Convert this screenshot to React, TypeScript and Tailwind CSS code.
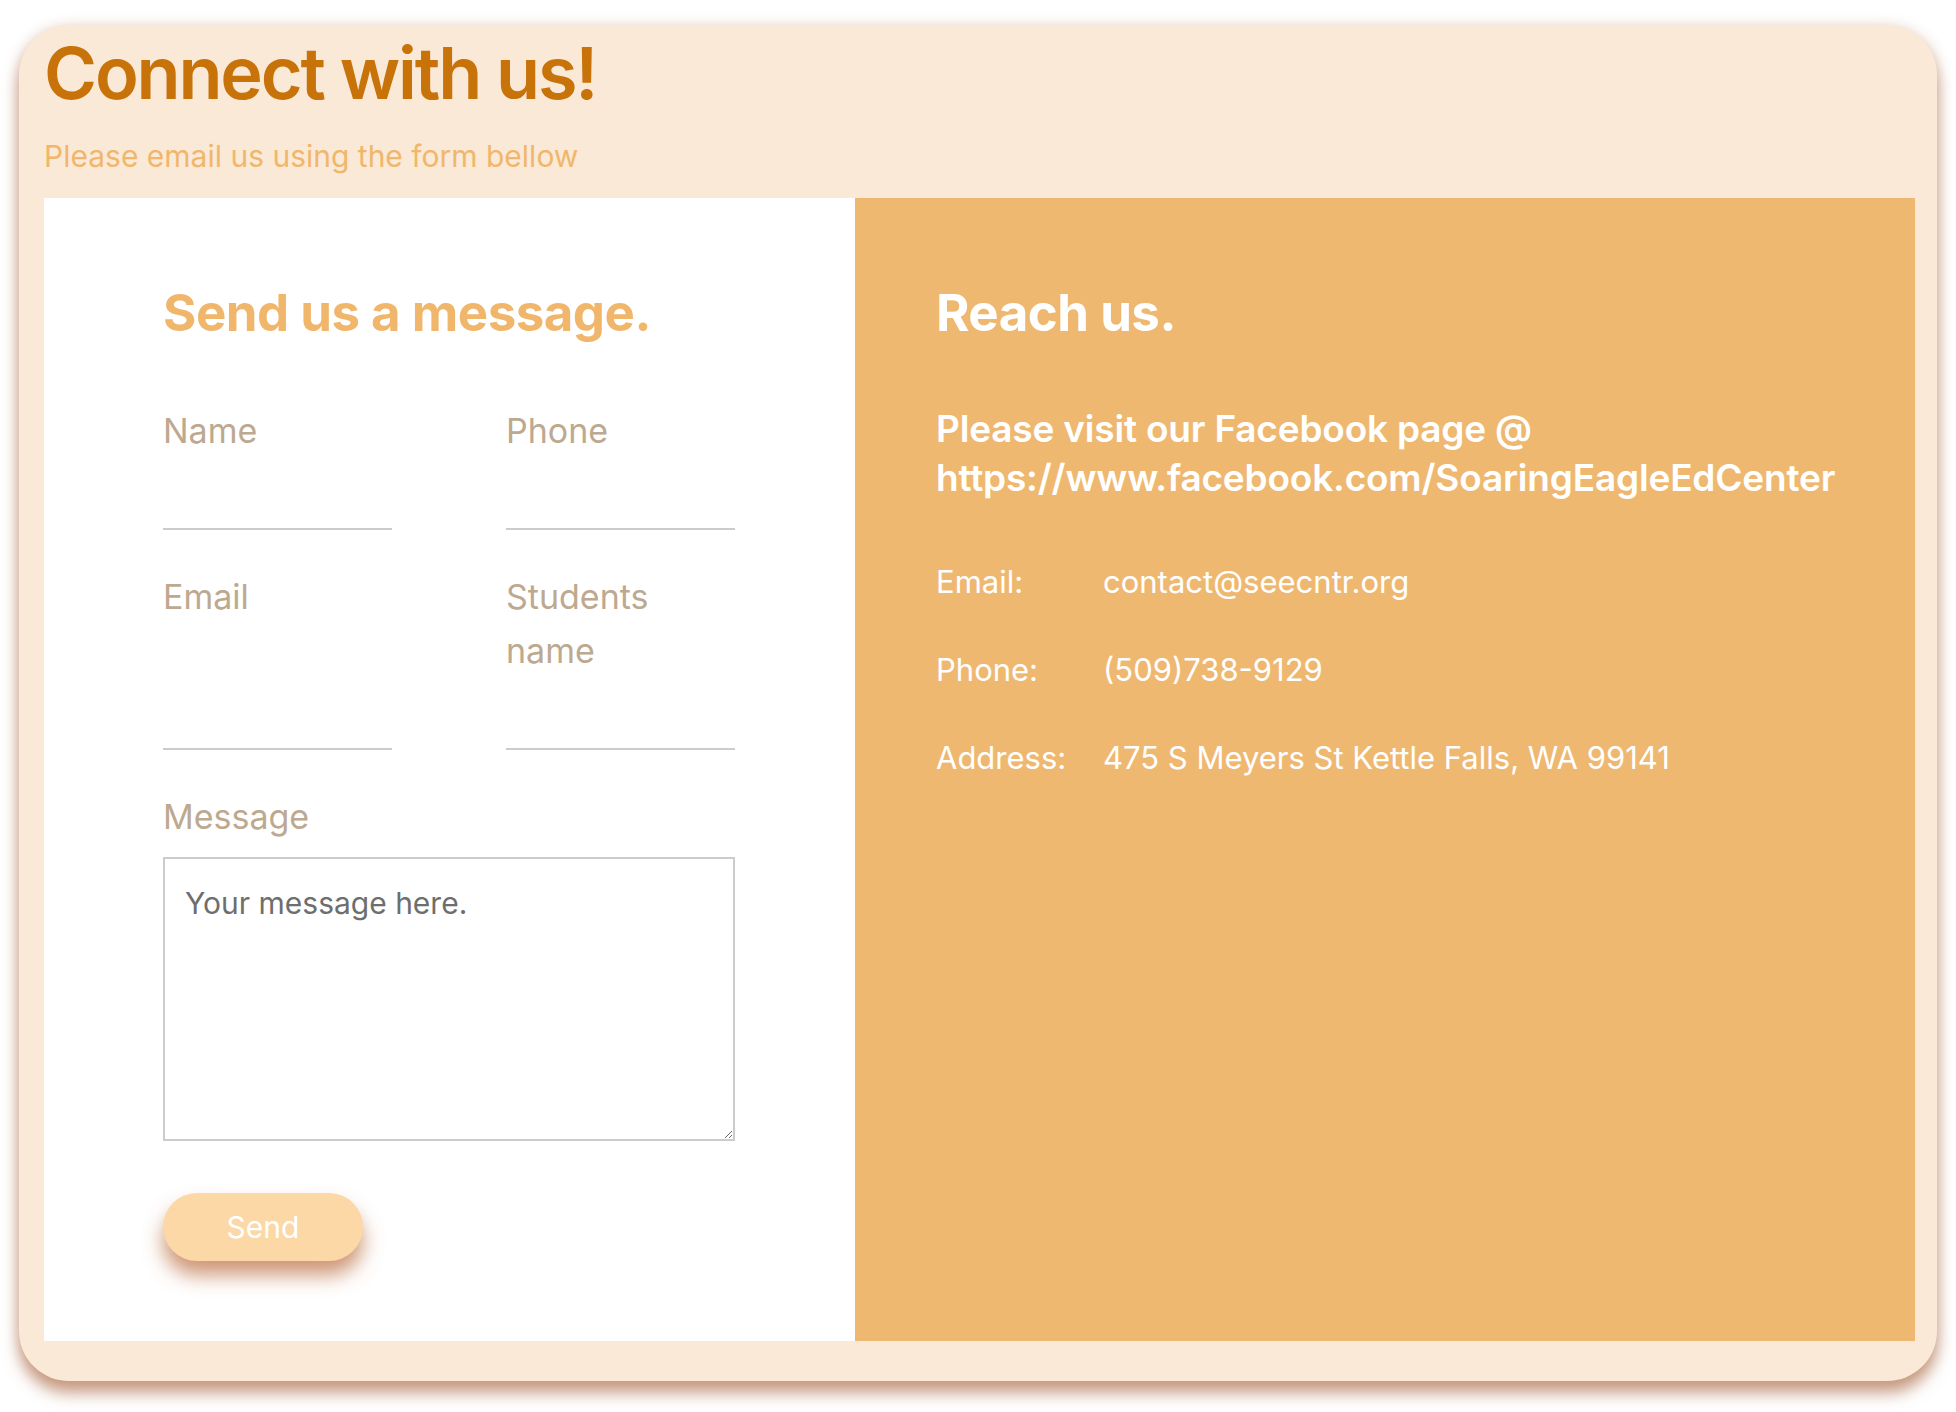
import React from "react";

const contactRows = [
  { label: "Email:", value: "contact@seecntr.org" },
  { label: "Phone:", value: "(509)738-9129" },
  { label: "Address:", value: "475 S Meyers St Kettle Falls, WA 99141" }
];

function Field({ label }: { label: string }) {
  return (
    <div className="flex flex-col">
      <label className="max-w-[200px] flex-1 text-[34px] leading-[54px] text-[#BDA98F]">{label}</label>
      <input
        type="text"
        className="h-[72px] w-full border-b-2 border-[#cccccc] bg-transparent outline-none"
      />
    </div>
  );
}

export default function App() {
  return (
    <div className="min-h-[1412px] bg-white px-[19px] pt-[25px] font-['Inter',sans-serif]">
      <div className="flex h-[1356px] flex-col rounded-[50px] bg-[#FAE9D7] pt-[5px] pr-[22px] pb-[40px] pl-[25px] shadow-[0_12px_16px_rgba(165,95,55,0.6),0_0_14px_rgba(165,95,55,0.2)]">
        <h1 className="text-[72px] leading-[86px] font-semibold tracking-[-0.03em] text-[#C8730A]">Connect with us!</h1>
        <p className="mt-[22px] text-[30px] leading-[36px] text-[#F0B76C]">Please email us using the form bellow</p>

        <div className="mt-[24px] flex flex-1">
          {/* form side */}
          <div className="w-[811px] bg-white pt-[85px] pl-[119px]">
            <h2 className="text-[51px] leading-[60px] font-bold tracking-[-0.01em] text-[#F0B76C]">Send us a message.</h2>
            <form className="mt-[61px] w-[572px]">
              <div className="grid grid-cols-2 gap-x-[114px] gap-y-[40px]">
                <Field label="Name" />
                <Field label="Phone" />
                <Field label="Email" />
                <Field label="Students name" />
              </div>
              <label className="mt-[40px] block text-[34px] leading-[54px] text-[#BDA98F]">Message</label>
              <textarea
                placeholder="Your message here."
                className="mt-[13px] block h-[284px] w-[572px] border-2 border-[#cccccc] px-[20px] pt-[26px] text-[30px] leading-[36px] outline-none placeholder:text-[#6e6e6e]"
              />
              <button
                type="button"
                className="mt-[52px] h-[68px] w-[200px] rounded-full bg-[#FCD8A6] text-[30px] text-white shadow-[0_14px_20px_rgba(185,105,60,0.7)]"
              >
                Send
              </button>
            </form>
          </div>

          {/* contact side */}
          <div className="flex-1 bg-[#EFB870] pt-[85px] pl-[81px] text-white">
            <h2 className="text-[51px] leading-[60px] font-bold tracking-[-0.01em]">Reach us.</h2>
            <p className="mt-[61px] text-[37px] leading-[49px] font-semibold tracking-[-0.005em]">
              Please visit our Facebook page @ https://www.facebook.com/SoaringEagleEdCenter
            </p>
            <div className="mt-[62px] flex flex-col gap-[52px]">
              {contactRows.map((row) => (
                <div key={row.label} className="flex text-[31px] leading-[36px]">
                  <span className="w-[167px] shrink-0">{row.label}</span>
                  <span>{row.value}</span>
                </div>
              ))}
            </div>
          </div>
        </div>
      </div>
    </div>
  );
}
